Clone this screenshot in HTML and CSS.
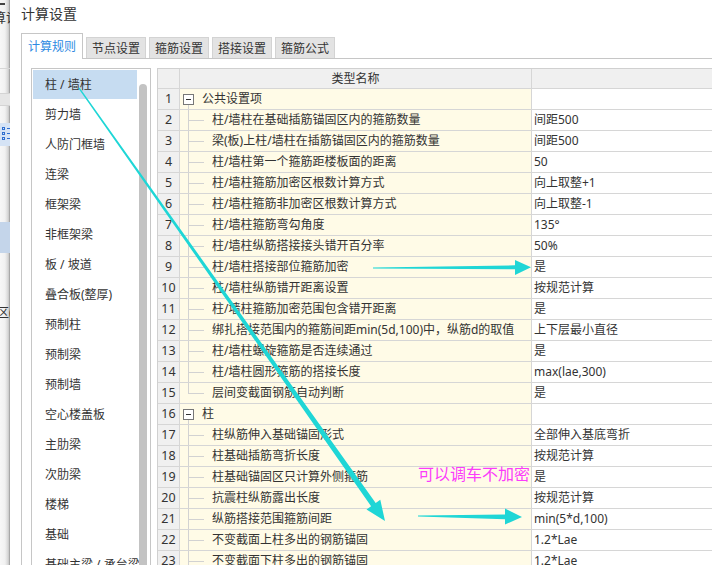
FILE: index.html
```html
<!DOCTYPE html>
<html lang="zh-CN">
<head>
<meta charset="utf-8">
<title>计算设置</title>
<link rel="stylesheet" href="styles.css">
</head>
<body>
<div class="app">
  <div class="behind">
    <div class="b-topline"></div>
    <div class="b-text">算设</div>
    <div class="b-line"></div>
    <div class="b-band"></div>
    <div class="b-icon">
      <svg width="10" height="23" viewBox="0 0 10 23">
        <g fill="none" stroke="#2f6fd0" stroke-width="1">
          <rect x="2.5" y="4.5" width="2" height="2"/>
          <rect x="2.5" y="9.5" width="2" height="2"/>
          <rect x="2.5" y="14.5" width="2" height="2"/>
        </g>
        <g fill="#2f6fd0">
          <rect x="7" y="5" width="3" height="1"/>
          <rect x="7" y="10" width="3" height="1"/>
          <rect x="7" y="15" width="3" height="1"/>
        </g>
      </svg>
    </div>
    <div class="b-sel"></div>
    <div class="b-text2">区(</div>
  </div>

  <div class="dialog">
    <div class="title">计算设置</div>
    <div class="tabs">
      <div class="tab active">计算规则</div>
      <div class="tab">节点设置</div>
      <div class="tab">箍筋设置</div>
      <div class="tab">搭接设置</div>
      <div class="tab">箍筋公式</div>
    </div>
    <div class="panel">
      <div class="listbox">
        <ul class="items">
          <li class="sel">柱 / 墙柱</li>
          <li>剪力墙</li>
          <li>人防门框墙</li>
          <li>连梁</li>
          <li>框架梁</li>
          <li>非框架梁</li>
          <li>板 / 坡道</li>
          <li>叠合板(整厚)</li>
          <li>预制柱</li>
          <li>预制梁</li>
          <li>预制墙</li>
          <li>空心楼盖板</li>
          <li>主肋梁</li>
          <li>次肋梁</li>
          <li>楼梯</li>
          <li>基础</li>
          <li>基础主梁 / 承台梁</li>
        </ul>
        <div class="vscroll"><div class="thumb"></div></div>
      </div>

      <div class="grid">
        <div class="row head"><div class="c num"></div><div class="c name">类型名称</div><div class="c val"></div></div>
        <div class="row"><div class="c num">1</div><div class="c name group"><span class="tog"></span><span class="gtext">公共设置项</span></div><div class="c val"></div></div>
        <div class="row"><div class="c num">2</div><div class="c name child">柱/墙柱在基础插筋锚固区内的箍筋数量</div><div class="c val">间距500</div></div>
        <div class="row"><div class="c num">3</div><div class="c name child">梁(板)上柱/墙柱在插筋锚固区内的箍筋数量</div><div class="c val">间距500</div></div>
        <div class="row"><div class="c num">4</div><div class="c name child">柱/墙柱第一个箍筋距楼板面的距离</div><div class="c val">50</div></div>
        <div class="row"><div class="c num">5</div><div class="c name child">柱/墙柱箍筋加密区根数计算方式</div><div class="c val">向上取整+1</div></div>
        <div class="row"><div class="c num">6</div><div class="c name child">柱/墙柱箍筋非加密区根数计算方式</div><div class="c val">向上取整-1</div></div>
        <div class="row"><div class="c num">7</div><div class="c name child">柱/墙柱箍筋弯勾角度</div><div class="c val">135°</div></div>
        <div class="row"><div class="c num">8</div><div class="c name child">柱/墙柱纵筋搭接接头错开百分率</div><div class="c val">50%</div></div>
        <div class="row"><div class="c num">9</div><div class="c name child">柱/墙柱搭接部位箍筋加密</div><div class="c val">是</div></div>
        <div class="row"><div class="c num">10</div><div class="c name child">柱/墙柱纵筋错开距离设置</div><div class="c val">按规范计算</div></div>
        <div class="row"><div class="c num">11</div><div class="c name child">柱/墙柱箍筋加密范围包含错开距离</div><div class="c val">是</div></div>
        <div class="row"><div class="c num">12</div><div class="c name child">绑扎搭接范围内的箍筋间距min(5d,100)中，纵筋d的取值</div><div class="c val">上下层最小直径</div></div>
        <div class="row"><div class="c num">13</div><div class="c name child">柱/墙柱螺旋箍筋是否连续通过</div><div class="c val">是</div></div>
        <div class="row"><div class="c num">14</div><div class="c name child">柱/墙柱圆形箍筋的搭接长度</div><div class="c val">max(lae,300)</div></div>
        <div class="row"><div class="c num">15</div><div class="c name child last">层间变截面钢筋自动判断</div><div class="c val">是</div></div>
        <div class="row"><div class="c num">16</div><div class="c name group"><span class="tog"></span><span class="gtext">柱</span></div><div class="c val"></div></div>
        <div class="row"><div class="c num">17</div><div class="c name child">柱纵筋伸入基础锚固形式</div><div class="c val">全部伸入基底弯折</div></div>
        <div class="row"><div class="c num">18</div><div class="c name child">柱基础插筋弯折长度</div><div class="c val">按规范计算</div></div>
        <div class="row"><div class="c num">19</div><div class="c name child">柱基础锚固区只计算外侧箍筋</div><div class="c val">是</div></div>
        <div class="row"><div class="c num">20</div><div class="c name child">抗震柱纵筋露出长度</div><div class="c val">按规范计算</div></div>
        <div class="row"><div class="c num">21</div><div class="c name child">纵筋搭接范围箍筋间距</div><div class="c val">min(5*d,100)</div></div>
        <div class="row"><div class="c num">22</div><div class="c name child">不变截面上柱多出的钢筋锚固</div><div class="c val">1.2*Lae</div></div>
        <div class="row"><div class="c num">23</div><div class="c name child">不变截面下柱多出的钢筋锚固</div><div class="c val">1.2*Lae</div></div>
      </div>
    </div>
  </div>
</div>

<svg class="annot" width="712" height="565" viewBox="0 0 712 565">
  <g fill="#1fd6d6">
    <polygon points="79.5,87.6 375.7,503.1 380.3,499.8 385,521 366.5,509.6 371.1,506.3 78.5,88.4"/>
    <polygon points="373,267.5 515,265.3 515,260 531,267.2 515,275 515,269.2 373,268.5"/>
    <polygon points="418,515.4 505,514.5 505,508.5 522,517 505,524.5 505,519.3 418,516.6"/>
  </g>
</svg>
<div class="note">可以调车不加密</div>
</body>
</html>
```

FILE: styles.css
```css
html, body {
  margin: 0;
  padding: 0;
  width: 712px;
  height: 565px;
  overflow: hidden;
  background: #fff;
}

body {
  position: relative;
  font-family: "Noto Sans", "Noto Sans CJK SC", sans-serif;
  font-size: 12px;
  color: #333;
}

.app {
  display: flex;
  height: 565px;
}

/* window partially visible behind the dialog */
.behind {
  width: 10px;
  flex: none;
  overflow: hidden;
  display: flex;
  flex-direction: column;
  background: linear-gradient(to right, #f7f7f7 0, #f1f1f1 5px, #d6d6d6 8px, #c4c4c4 9px, #a8a8a8 9px, #a8a8a8 10px);
}
.b-topline { margin-top: 3px; height: 2px; width: 5px; background: #444; flex: none; }
.b-text {
  margin-top: 5px;
  height: 14px;
  line-height: 14px;
  font-size: 13px;
  margin-left: -7px;
  white-space: nowrap;
  flex: none;
}
.b-line { margin-top: 44px; height: 1px; background: #d6d6d6; flex: none; }
.b-band {
  margin-top: 24px;
  height: 13px;
  box-sizing: border-box;
  background: #e6e6e6;
  border-top: 1px solid #d4d4d4;
  border-bottom: 1px solid #d4d4d4;
  flex: none;
}
.b-icon { margin-top: 17px; height: 23px; background: #d5e3f5; flex: none; }
.b-icon svg { display: block; }
.b-sel { margin-top: 76px; height: 31px; background: #c4d5ea; flex: none; }
.b-text2 {
  margin-top: 52px;
  height: 15px;
  line-height: 15px;
  font-size: 12px;
  margin-left: -3px;
  white-space: nowrap;
  flex: none;
}

/* dialog */
.dialog {
  flex: 1;
  min-width: 0;
  display: flex;
  flex-direction: column;
  background: #fff;
}
.title {
  height: 27px;
  line-height: 27px;
  padding-left: 11px;
  font-size: 14px;
  color: #333;
  font-family: "Noto Sans CJK SC", sans-serif;
}

.tabs {
  display: flex;
  align-items: flex-end;
  gap: 3px;
  margin-top: 6px;
  padding-left: 11px;
  height: 25px;
}
.tab {
  box-sizing: border-box;
  width: 60px;
  height: 21px;
  line-height: 20px;
  text-align: center;
  background: #e3e3e3;
  border: 1px solid #d3d3d3;
  border-bottom: 0;
  color: #333;
  font-family: "Noto Sans CJK SC", sans-serif;
}
.tab.active {
  position: relative;
  z-index: 1;
  width: 62px;
  height: 26px;
  margin-bottom: -1px;
  padding-top: 2px;
  background: #fff;
  border-color: #c6c6c6;
  color: #2e8ae2;
}

.panel {
  flex: 1;
  display: flex;
  align-items: flex-start;
  margin-left: 11px;
  padding: 9px 0 0 9px;
  border-top: 1px solid #c6c6c6;
  border-left: 1px solid #c6c6c6;
  overflow: hidden;
}

/* left list */
.listbox {
  flex: none;
  box-sizing: border-box;
  width: 120px;
  height: 520px;
  border: 1px solid #c6c6c6;
  padding: 1px 0 0 1px;
  display: flex;
  overflow: hidden;
}
.items {
  list-style: none;
  margin: 0;
  padding: 0;
  width: 104px;
  flex: none;
}
.items li {
  height: 30px;
  line-height: 30px;
  padding-left: 12px;
  white-space: nowrap;
  color: #333;
}
.items li.sel {
  background: linear-gradient(#c6dcf1, #c6dcf1) top left / 100% 29px no-repeat;
  line-height: 29px;
}
.vscroll {
  width: 13px;
  flex: none;
}
.thumb {
  margin: 14px 0 0 2px;
  width: 8px;
  height: 500px;
  border-radius: 4px;
  background: #c3c3c3;
}

/* grid table */
.grid {
  flex: none;
  margin-left: 6px;
  width: 575px;
  border-top: 1px solid #d0d0d0;
  border-left: 1px solid #d0d0d0;
}
.row {
  display: grid;
  grid-template-columns: 22px 352px 200px;
  height: 21px;
}
.c {
  box-sizing: border-box;
  border-right: 1px solid #d6d6d6;
  border-bottom: 1px solid #d6d6d6;
  line-height: 20px;
  white-space: nowrap;
  overflow: hidden;
}
.num {
  background: #f0f0f0;
  text-align: center;
  font-size: 12.5px;
}
.name {
  position: relative;
  background: #fffbe7;
}
.val {
  background: #fff;
  padding-left: 2px;
}
.row.head {
  height: 20px;
}
.row.head .c {
  line-height: 19px;
  background: #f0f0f0;
}
.row.head .name {
  text-align: center;
}

.child {
  padding-left: 32px;
}
.child::before {
  content: "";
  position: absolute;
  left: 8px;
  top: 0;
  bottom: 0;
  width: 1px;
  background: #d2d2d2;
}
.child.last::before {
  bottom: 10px;
}
.child::after {
  content: "";
  position: absolute;
  left: 8px;
  top: 10px;
  width: 16px;
  height: 1px;
  background: #d2d2d2;
}

.group {
  display: flex;
  align-items: center;
  padding-left: 3px;
}
.group::before {
  content: "";
  position: absolute;
  left: 8px;
  top: 16px;
  bottom: 0;
  width: 1px;
  background: #d2d2d2;
}
.tog {
  position: relative;
  box-sizing: border-box;
  width: 11px;
  height: 11px;
  margin-top: 1px;
  border: 1px solid #777;
  background: #fff;
  flex: none;
}
.tog::after {
  content: "";
  position: absolute;
  left: 2px;
  top: 4px;
  width: 5px;
  height: 1px;
  background: #333;
}
.gtext {
  margin-left: 8px;
}

/* annotations drawn over the screenshot */
.annot {
  position: absolute;
  left: 0;
  top: 0;
  pointer-events: none;
}
.note {
  position: absolute;
  left: 418px;
  top: 463px;
  line-height: 20px;
  font-size: 16px;
  font-family: "Noto Sans CJK SC", sans-serif;
  color: #fb3cfb;
  white-space: nowrap;
}
```
